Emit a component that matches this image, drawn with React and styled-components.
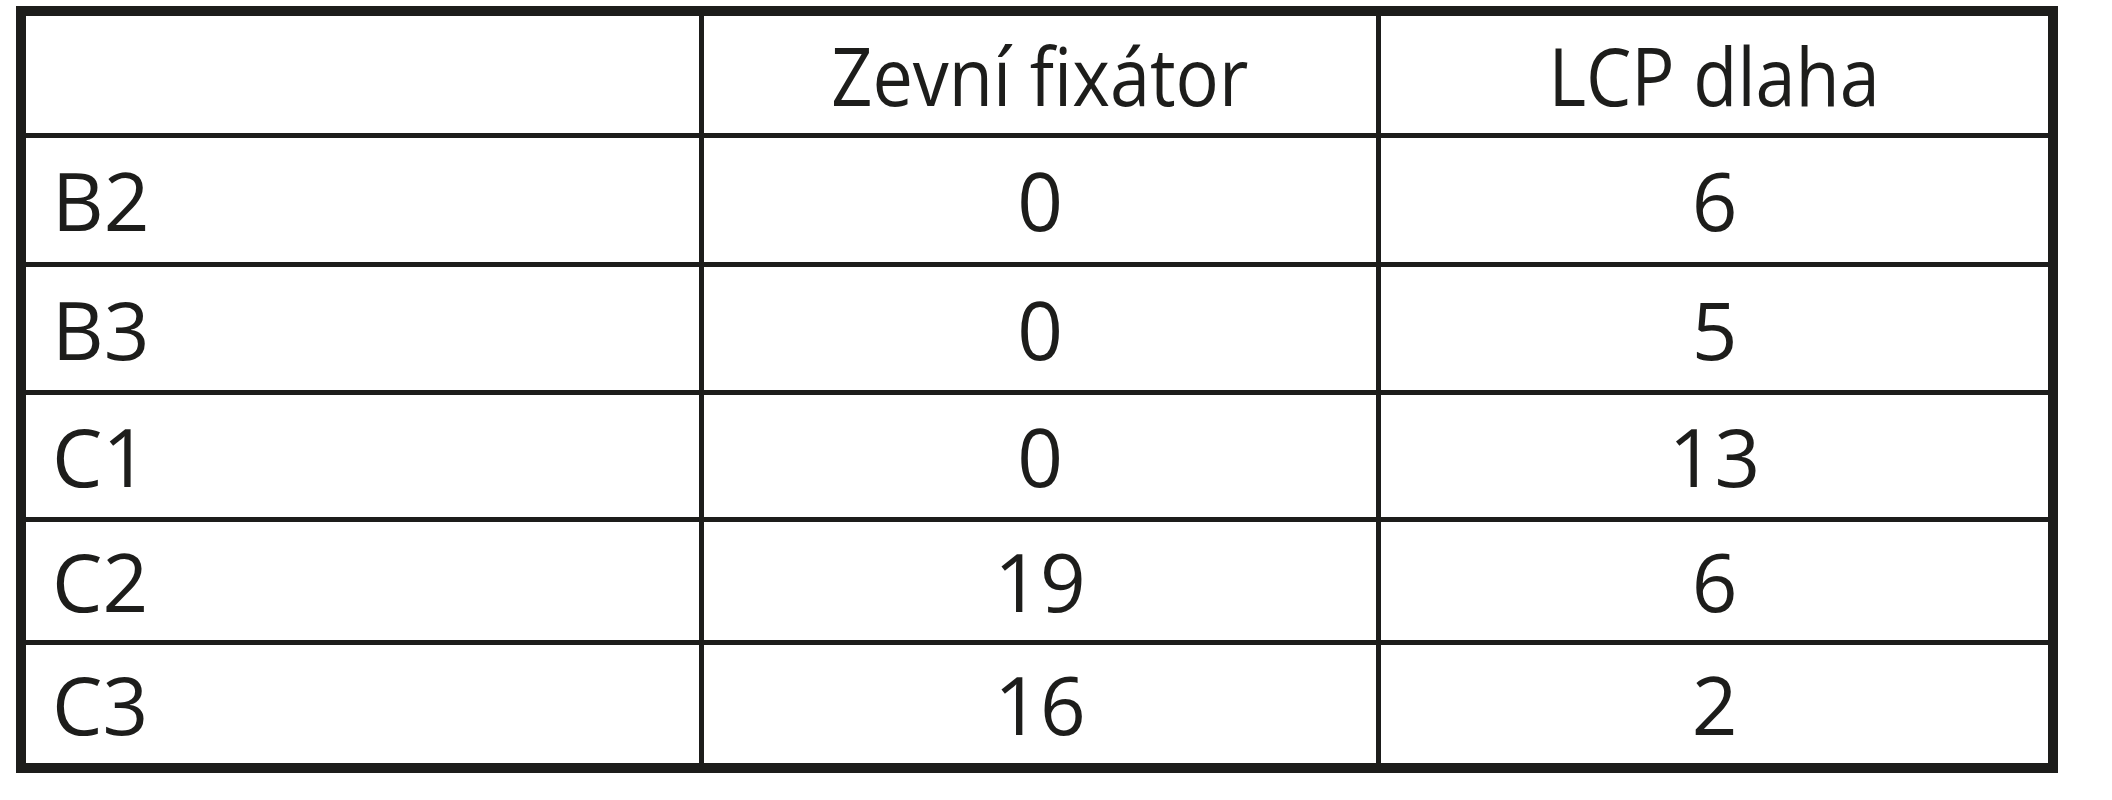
import React from "react";
import styled, { createGlobalStyle } from "styled-components";

const rows = [
  { label: "B2", fixator: "0", dlaha: "6" },
  { label: "B3", fixator: "0", dlaha: "5" },
  { label: "C1", fixator: "0", dlaha: "13" },
  { label: "C2", fixator: "19", dlaha: "6" },
  { label: "C3", fixator: "16", dlaha: "2" }
];

export default function App() {
  return (
    <>
      <GlobalStyle />
      <Page>
        <Table>
          <Cell />
          <Cell $center>
            <HeadText>Zevní fixátor</HeadText>
          </Cell>
          <Cell $center>
            <HeadText>LCP dlaha</HeadText>
          </Cell>
          {rows.map((row) => (
            <React.Fragment key={row.label}>
              <Cell>{row.label}</Cell>
              <Cell $center>{row.fixator}</Cell>
              <Cell $center>{row.dlaha}</Cell>
            </React.Fragment>
          ))}
        </Table>
      </Page>
    </>
  );
}

const GlobalStyle = createGlobalStyle`
  html, body {
    margin: 0;
    padding: 0;
    background: #ffffff;
  }
  body {
    font-family: "Open Sans", "Liberation Sans", sans-serif;
  }
`;

const Page = styled.div`
  padding: 6px 0 0 16px;
`;

const Table = styled.div`
  display: inline-grid;
  grid-template-columns: 673px 672px 667px;
  grid-template-rows: 117px 124px 123px 122px 118px 118px;
  gap: 5px;
  padding: 10px;
  background: #1d1d1b;
`;

const Cell = styled.div`
  display: flex;
  align-items: center;
  justify-content: ${(props) => (props.$center ? "center" : "flex-start")};
  padding-left: ${(props) => (props.$center ? "0" : "26px")};
  background: #ffffff;
  color: #1d1d1b;
  font-size: 80px;
  line-height: 1;
`;

const HeadText = styled.span`
  display: inline-block;
  transform: scaleX(0.9);
  transform-origin: center;
  white-space: nowrap;
`;
